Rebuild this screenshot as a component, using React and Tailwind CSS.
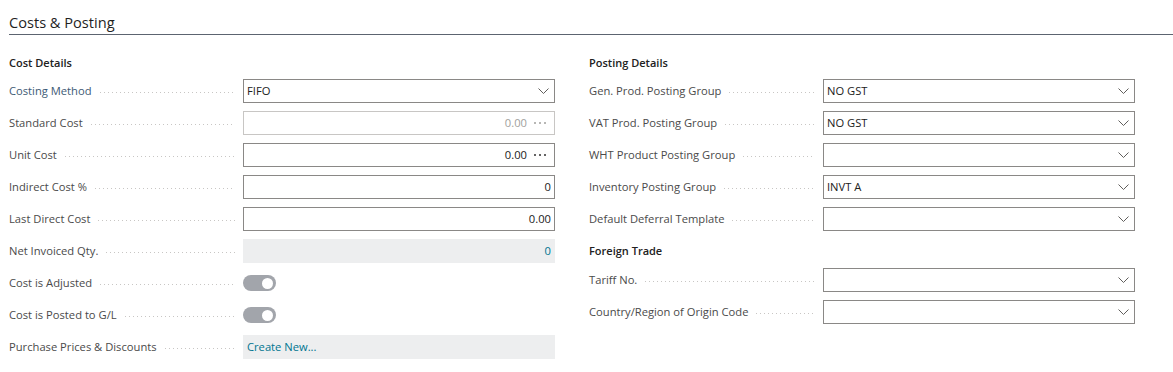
import React from "react";

const font = { fontFamily: "'Segoe UI', 'Open Sans', 'Noto Sans', sans-serif" };

function Chevron() {
  return (
    <svg width="11" height="6" viewBox="0 0 11 6" className="shrink-0">
      <path d="M0.5 0.5 L5.5 5.5 L10.5 0.5" fill="none" stroke="#605e5c" strokeWidth="1" />
    </svg>
  );
}

function Dots({ color = "#323130" }) {
  return (
    <span className="ml-[7px] flex shrink-0 gap-[3px] mr-[5px]">
      <span className="w-[2px] h-[2px] rounded-full" style={{ background: color }} />
      <span className="w-[2px] h-[2px] rounded-full" style={{ background: color }} />
      <span className="w-[2px] h-[2px] rounded-full" style={{ background: color }} />
    </span>
  );
}

function Row({ label, labelClass = "text-[#4a4a4a]", children }) {
  return (
    <div className="flex items-center h-6 mb-2">
      <div className="w-[234px] shrink-0 flex items-center pr-2 h-full">
        <span className={`text-[11.2px] whitespace-nowrap ${labelClass}`}>{label}</span>
        <span className="flex-1 ml-2 mt-[3px] h-px bg-[repeating-linear-gradient(to_right,#c8c6c4_0_1px,transparent_1px_4px)]" />
      </div>
      <div className="flex-1 h-full">{children}</div>
    </div>
  );
}

function Select({ value }) {
  return (
    <div className="h-full border border-[#8a8886] flex items-center justify-between pl-[3px] pr-[5px]">
      <span className="text-[11.2px] text-[#212121]">{value}</span>
      <Chevron />
    </div>
  );
}

function NumberBox({ value, ellipsis, disabled }) {
  return (
    <div
      className={`h-full border flex items-center justify-end pr-[3px] ${
        disabled ? "border-[#c8c6c4] text-[#a19f9d]" : "border-[#8a8886] text-[#212121]"
      }`}
    >
      <span className="text-[11.2px]">{value}</span>
      {ellipsis && <Dots color={disabled ? "#a19f9d" : "#323130"} />}
    </div>
  );
}

function Toggle() {
  return (
    <div className="h-full flex items-center">
      <div className="w-[33px] h-[16px] rounded-full bg-[#a2a5ab] flex items-center justify-end pr-[3px]">
        <div className="w-[11px] h-[11px] rounded-full bg-white" />
      </div>
    </div>
  );
}

function Heading({ children, className = "" }) {
  return (
    <div className={`h-4 leading-4 text-[11px] font-semibold text-[#212121] ${className}`}>
      {children}
    </div>
  );
}

export default function App() {
  return (
    <div className="w-[1173px] h-[372px] bg-white pl-[9px] pt-[12px]" style={font}>
      <div className="h-[23px] leading-[20px] text-[14.6px] text-[#1f1f1f] border-b border-[#5c6470]">
        Costs &amp; Posting
      </div>

      <div className="flex gap-[34px] mt-[20px] pr-[38px]">
        {/* left column */}
        <div className="w-[546px]">
          <Heading className="mb-2">Cost Details</Heading>
          <Row label="Costing Method" labelClass="text-[#3d5a75]">
            <Select value="FIFO" />
          </Row>
          <Row label="Standard Cost">
            <NumberBox value="0.00" ellipsis disabled />
          </Row>
          <Row label="Unit Cost">
            <NumberBox value="0.00" ellipsis />
          </Row>
          <Row label="Indirect Cost %">
            <NumberBox value="0" />
          </Row>
          <Row label="Last Direct Cost">
            <NumberBox value="0.00" />
          </Row>
          <Row label="Net Invoiced Qty.">
            <div className="h-full bg-[#edeeef] flex items-center justify-end pr-[4px]">
              <span className="text-[11.2px] text-[#00758f]">0</span>
            </div>
          </Row>
          <Row label="Cost is Adjusted">
            <Toggle />
          </Row>
          <Row label="Cost is Posted to G/L">
            <Toggle />
          </Row>
          <Row label="Purchase Prices & Discounts">
            <div className="h-full bg-[#edeeef] flex items-center pl-[4px]">
              <span className="text-[11.2px] text-[#00758f]">Create New...</span>
            </div>
          </Row>
        </div>

        {/* right column */}
        <div className="w-[546px]">
          <Heading className="mb-2">Posting Details</Heading>
          <Row label="Gen. Prod. Posting Group">
            <Select value="NO GST" />
          </Row>
          <Row label="VAT Prod. Posting Group">
            <Select value="NO GST" />
          </Row>
          <Row label="WHT Product Posting Group">
            <Select value="" />
          </Row>
          <Row label="Inventory Posting Group">
            <Select value="INVT A" />
          </Row>
          <Row label="Default Deferral Template">
            <Select value="" />
          </Row>
          <Heading className="mt-[12px] mb-[9px]">Foreign Trade</Heading>
          <Row label="Tariff No.">
            <Select value="" />
          </Row>
          <Row label="Country/Region of Origin Code">
            <Select value="" />
          </Row>
        </div>
      </div>
    </div>
  );
}
